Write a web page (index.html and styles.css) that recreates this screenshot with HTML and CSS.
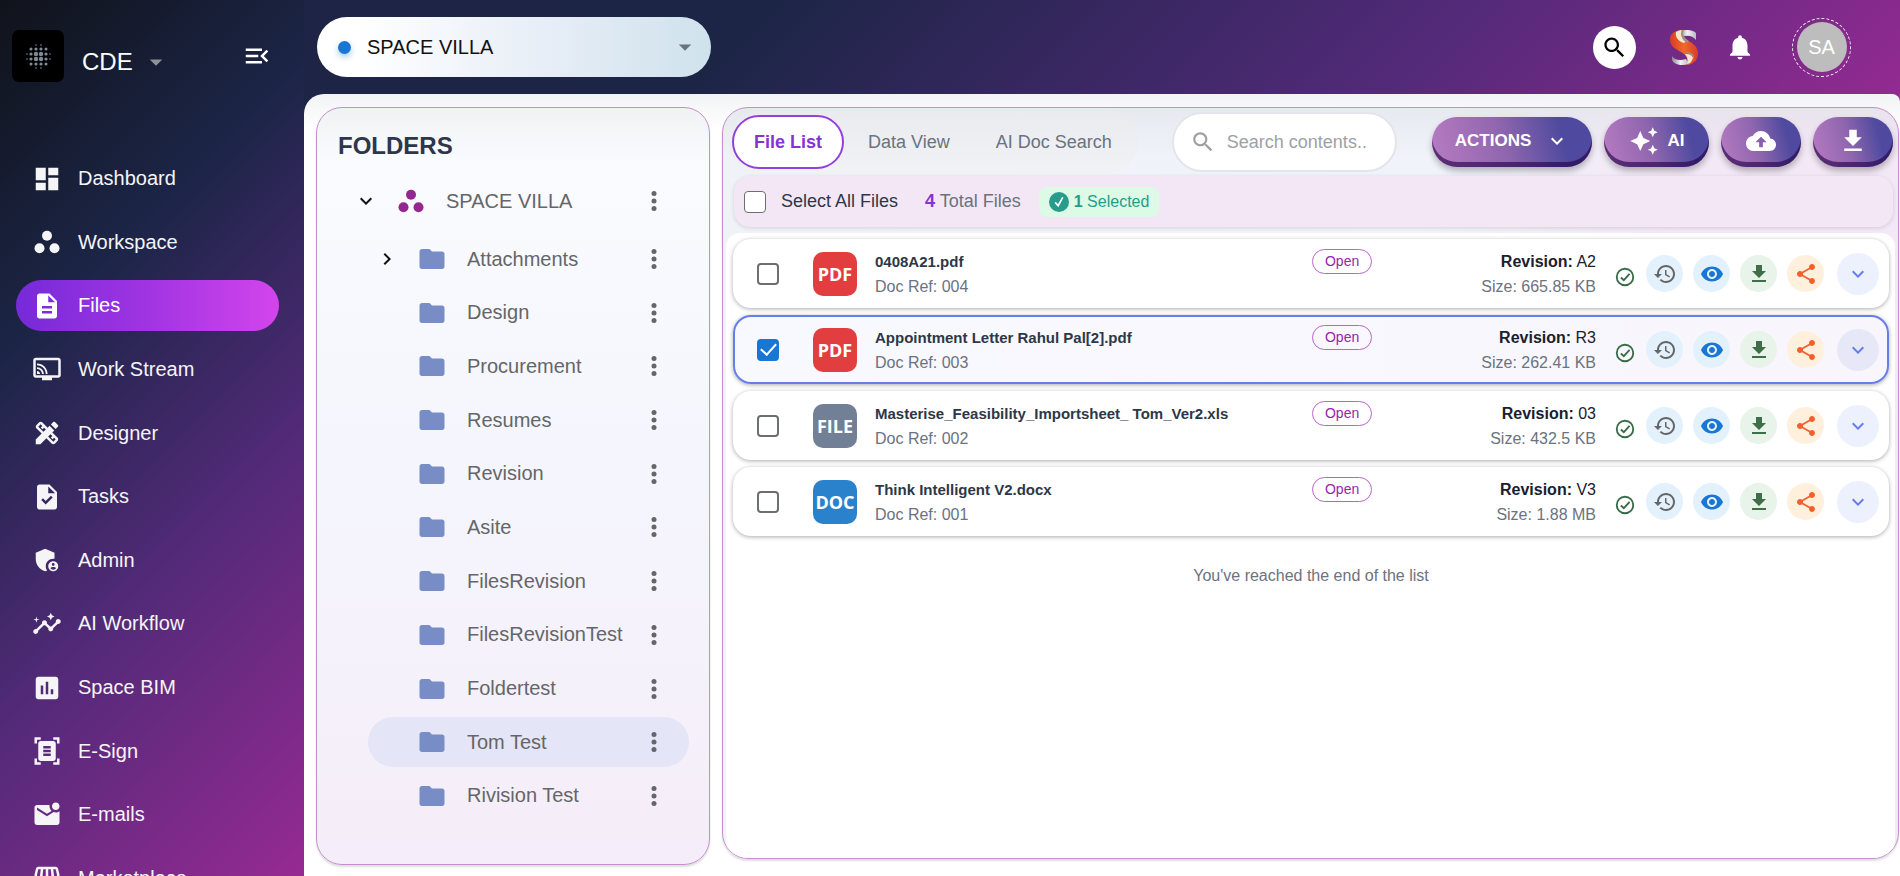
FILE: index.html
```html
<!DOCTYPE html>
<html lang="en">
<head>
<meta charset="utf-8">
<title>CDE - Files</title>
<link rel="stylesheet" href="styles.css">
</head>
<body>
<svg class="sprite" aria-hidden="true">
  <symbol id="i-dashboard" viewBox="0 0 24 24"><path d="M3 13h8V3H3v10zm0 8h8v-6H3v6zm10 0h8V11h-8v10zm0-18v6h8V3h-8z"/></symbol>
  <symbol id="i-workspace" viewBox="0 0 24 24"><circle cx="12" cy="7" r="4"/><circle cx="6" cy="17" r="4"/><circle cx="18" cy="17" r="4"/></symbol>
  <symbol id="i-file" viewBox="0 0 24 24"><path d="M14 2H6c-1.1 0-1.99.9-1.99 2L4 20c0 1.1.89 2 1.99 2H18c1.1 0 2-.9 2-2V8l-6-6zm2 16H8v-2h8v2zm0-4H8v-2h8v2zm-3-5V3.500L18.500 9H13z"/></symbol>
  <symbol id="i-stream" viewBox="0 0 24 24"><path d="M21 3H3c-1.100 0-2 .9-2 2v12c0 1.100.9 2 2 2h5v2h8v-2h5c1.100 0 2-.9 2-2V5c0-1.100-.9-2-2-2zm0 14H3V5h18v12z"/><path d="M4 13.500v2.500h2.500c0-1.400-1.100-2.500-2.500-2.500zM4 10.500V12c2.200 0 4 1.800 4 4h1.500c0-3-2.500-5.500-5.500-5.500zM4 7.500V9c3.900 0 7 3.100 7 7h1.500c0-4.700-3.800-8.500-8.500-8.500z"/></symbol>
  <symbol id="i-design" viewBox="0 0 24 24"><path d="M16.24 11.51l1.57-1.57-3.75-3.75-1.57 1.57-4.14-4.13c-.78-.78-2.05-.78-2.83 0l-1.9 1.9c-.78.78-.78 2.05 0 2.83l4.13 4.13L3 17.25V21h3.75l4.76-4.76 4.13 4.13c.95.95 2.23.6 2.83 0l1.9-1.9c.78-.78.78-2.05 0-2.83l-4.13-4.13zm-7.06-.44L5.04 6.940l1.890-1.900L8.200 6.310 7.020 7.500l1.410 1.410 1.190-1.190 1.450 1.450-1.890 1.900zm7.880 7.890l-4.130-4.130 1.900-1.900 1.450 1.450-1.190 1.190 1.410 1.410 1.190-1.190 1.270 1.270-1.900 1.900zM20.710 7.040c.39-.39.39-1.020 0-1.410l-2.340-2.340c-.47-.47-1.120-.29-1.410 0l-1.830 1.830 3.750 3.750 1.830-1.830z"/></symbol>
  <symbol id="i-task" viewBox="0 0 24 24"><path d="M14 2H6c-1.100 0-1.990.9-1.990 2L4 20c0 1.100.89 2 1.990 2H18c1.100 0 2-.9 2-2V8l-6-6zm-3.060 16L7.400 14.460l1.410-1.410 2.120 2.120 4.240-4.240 1.410 1.410L10.940 18zM13 9V3.500L18.500 9H13z"/></symbol>
  <symbol id="i-admin" viewBox="0 0 24 24"><path d="M17 11c.34 0 .67.04 1 .09V6.270L10.500 3 3 6.270v4.910c0 4.540 3.200 8.790 7.500 9.820.55-.13 1.080-.32 1.600-.55-.69-.98-1.100-2.170-1.100-3.450 0-3.310 2.690-6 6-6z"/><path d="M17 13c-2.210 0-4 1.790-4 4s1.790 4 4 4 4-1.790 4-4-1.790-4-4-4zm0 1.380c.62 0 1.120.51 1.120 1.120s-.51 1.120-1.120 1.120-1.120-.51-1.120-1.120.5-1.120 1.120-1.120zm0 5.370c-.93 0-1.740-.46-2.240-1.170.05-.72 1.510-1.080 2.240-1.080s2.190.36 2.240 1.080c-.5.71-1.310 1.170-2.240 1.170z"/></symbol>
  <symbol id="i-insights" viewBox="0 0 24 24"><path d="M21 8c-1.450 0-2.260 1.440-1.930 2.510l-3.550 3.560c-.3-.09-.74-.09-1.040 0l-2.550-2.550C12.270 10.450 11.460 9 10 9c-1.450 0-2.270 1.440-1.930 2.520l-4.560 4.550C2.440 15.740 1 16.550 1 18c0 1.100.9 2 2 2 1.450 0 2.260-1.440 1.930-2.510l4.550-4.560c.3.09.74.09 1.040 0l2.550 2.550C12.730 16.550 13.540 18 15 18c1.450 0 2.270-1.440 1.930-2.520l3.560-3.550c1.070.33 2.510-.48 2.510-1.930 0-1.100-.9-2-2-2z"/><path d="M15 9l.94-2.070L18 6l-2.060-.93L15 3l-.92 2.070L12 6l2.080.93zM3.500 11L4 9l2-.5L4 8l-.5-2L3 8l-2 .5L3 9z"/></symbol>
  <symbol id="i-chart" viewBox="0 0 24 24"><path d="M19 3H5c-1.100 0-2 .9-2 2v14c0 1.100.9 2 2 2h14c1.100 0 2-.9 2-2V5c0-1.100-.9-2-2-2zM9 17H7v-7h2v7zm4 0h-2V7h2v10zm4 0h-2v-4h2v4z"/></symbol>
  <symbol id="i-scan" viewBox="0 0 24 24"><path d="M7 3H4v3H2V1h5v2zm15 3V1h-5v2h3v3h2zM7 21H4v-3H2v5h5v-2zm13-3v3h-3v2h5v-5h-2zM19 18c0 1.100-.9 2-2 2H7c-1.100 0-2-.9-2-2V6c0-1.100.9-2 2-2h10c1.100 0 2 .9 2 2v12zM15 8H9v2h6V8zm0 3H9v2h6v-2zm0 3H9v2h6v-2z"/></symbol>
  <symbol id="i-mail" viewBox="0 0 24 24"><path d="M22 8.980V18c0 1.100-.9 2-2 2H4c-1.100 0-2-.9-2-2V6c0-1.100.9-2 2-2h10.100c-.06.32-.1.66-.1 1 0 1.480.65 2.790 1.670 3.710L12 11 4 6v2l8 5 5.300-3.320c.54.2 1.100.32 1.700.32 1.130 0 2.160-.39 3-1.020zM16 5c0 1.660 1.340 3 3 3s3-1.340 3-3-1.340-3-3-3-3 1.340-3 3z"/></symbol>
  <symbol id="i-store" viewBox="0 0 24 24"><path d="M21.900 8.890l-1.050-4.370c-.22-.9-1-1.520-1.910-1.520H5.050c-.9 0-1.690.63-1.900 1.520L2.100 8.890c-.24 1.020-.02 2.060.62 2.880.08.11.19.19.28.29V19c0 1.100.9 2 2 2h14c1.100 0 2-.9 2-2v-6.940c.09-.09.2-.18.28-.28.64-.82.87-1.870.62-2.890zm-2.990-3.900l1.050 4.370c.1.42.01.84-.25 1.170-.14.18-.44.47-.94.47-.61 0-1.140-.49-1.210-1.140L16.980 5l1.930-.01zM13 5h1.960l.54 4.520c.05.39-.07.78-.33 1.070-.22.26-.54.41-.95.41-.67 0-1.220-.59-1.220-1.310V5zM8.490 9.520L9.040 5H11v4.690c0 .72-.55 1.310-1.290 1.310-.34 0-.65-.15-.89-.41-.25-.29-.37-.68-.33-1.070zm-4.450-.16L5.050 5h1.970l-.58 4.860c-.08.65-.6 1.140-1.210 1.140-.49 0-.8-.29-.93-.47-.27-.32-.36-.75-.26-1.170z"/></symbol>
  <symbol id="i-menu" viewBox="0 0 24 24"><path d="M3 18h13v-2H3v2zm0-5h10v-2H3v2zm0-7v2h13V6H3zm18 9.590L17.420 12 21 8.410 19.590 7l-5 5 5 5L21 15.590z"/></symbol>
  <symbol id="i-caret" viewBox="0 0 24 24"><path d="M7 10l5 5 5-5z"/></symbol>
  <symbol id="i-search" viewBox="0 0 24 24"><path d="M15.500 14h-.79l-.28-.27C15.410 12.590 16 11.110 16 9.500 16 5.910 13.090 3 9.500 3S3 5.910 3 9.500 5.910 16 9.500 16c1.610 0 3.090-.59 4.230-1.570l.27.28v.79l5 4.990L20.490 19l-4.990-5zm-6 0C7.010 14 5 11.990 5 9.500S7.010 5 9.500 5 14 7.010 14 9.500 11.990 14 9.500 14z"/></symbol>
  <symbol id="i-bell" viewBox="0 0 24 24"><path d="M12 22c1.100 0 2-.9 2-2h-4c0 1.100.89 2 2 2zm6-6v-5c0-3.070-1.640-5.640-4.500-6.320V4c0-.83-.67-1.500-1.500-1.500s-1.500.67-1.500 1.500v.68C7.630 5.360 6 7.920 6 11v5l-2 2v1h16v-1l-2-2z"/></symbol>
  <symbol id="i-folder" viewBox="0 0 24 24"><path d="M10 4H4c-1.100 0-1.990.9-1.990 2L2 18c0 1.100.9 2 2 2h16c1.100 0 2-.9 2-2V8c0-1.100-.9-2-2-2h-8l-2-2z"/></symbol>
  <symbol id="i-more" viewBox="0 0 24 24"><circle cx="12" cy="6" r="2"/><circle cx="12" cy="12" r="2"/><circle cx="12" cy="18" r="2"/></symbol>
  <symbol id="i-down" viewBox="0 0 24 24"><path d="M16.590 8.590L12 13.170 7.410 8.590 6 10l6 6 6-6z"/></symbol>
  <symbol id="i-right" viewBox="0 0 24 24"><path d="M10 6L8.590 7.410 13.170 12l-4.580 4.590L10 18l6-6z"/></symbol>
  <symbol id="i-sparkle" viewBox="0 0 24 24"><path d="M19 9l1.250-2.750L23 5l-2.750-1.250L19 1l-1.250 2.750L15 5l2.750 1.250L19 9zm-7.500.5L9 4 6.500 9.500 1 12l5.500 2.500L9 20l2.500-5.500L17 12l-5.500-2.500zM19 15l-1.250 2.750L15 19l2.750 1.250L19 23l1.250-2.750L23 19l-2.750-1.250L19 15z"/></symbol>
  <symbol id="i-cloud" viewBox="0 0 24 24"><path d="M19.350 10.040C18.670 6.590 15.640 4 12 4 9.110 4 6.600 5.640 5.350 8.040 2.340 8.360 0 10.910 0 14c0 3.310 2.690 6 6 6h13c2.760 0 5-2.240 5-5 0-2.640-2.050-4.780-4.650-4.960zM13.500 13v4h-3v-4H7.500L12 8.500l4.500 4.500h-3z"/></symbol>
  <symbol id="i-download" viewBox="0 0 24 24"><path d="M19 9h-4V3H9v6H5l7 7 7-7zM5 18v2h14v-2H5z"/></symbol>
  <symbol id="i-history" viewBox="0 0 24 24"><path d="M13 3c-4.970 0-9 4.030-9 9H1l3.890 3.890.07.14L9 12H6c0-3.870 3.130-7 7-7s7 3.130 7 7-3.130 7-7 7c-1.930 0-3.680-.79-4.940-2.060l-1.420 1.420C8.270 19.990 10.510 21 13 21c4.970 0 9-4.030 9-9s-4.030-9-9-9zm-1 5v5l4.280 2.540.72-1.210-3.500-2.080V8H12z"/></symbol>
  <symbol id="i-eye" viewBox="0 0 24 24"><path d="M12 4.500C7 4.500 2.730 7.610 1 12c1.730 4.390 6 7.500 11 7.500s9.270-3.110 11-7.500c-1.730-4.390-6-7.500-11-7.500zM12 17c-2.760 0-5-2.240-5-5s2.240-5 5-5 5 2.240 5 5-2.240 5-5 5zm0-8c-1.660 0-3 1.340-3 3s1.340 3 3 3 3-1.340 3-3-1.340-3-3-3z"/></symbol>
  <symbol id="i-share" viewBox="0 0 24 24"><path d="M18 16.080c-.76 0-1.440.3-1.960.77L8.910 12.700c.05-.23.09-.46.09-.7s-.04-.47-.09-.7l7.050-4.110c.54.5 1.250.81 2.040.81 1.660 0 3-1.340 3-3s-1.340-3-3-3-3 1.340-3 3c0 .24.04.47.09.7L8.040 9.810C7.500 9.310 6.790 9 6 9c-1.660 0-3 1.340-3 3s1.340 3 3 3c.79 0 1.500-.31 2.040-.81l7.120 4.160c-.05.21-.08.43-.08.65 0 1.610 1.310 2.920 2.920 2.920s2.920-1.310 2.920-2.920-1.310-2.920-2.920-2.920z"/></symbol>
  <symbol id="i-approved" viewBox="0 0 24 24"><path fill="none" stroke="currentColor" stroke-width="2" d="M12 3a9 9 0 1 0 0 18 9 9 0 0 0 0-18zM7.500 12.500l3.200 3L17 8.500"/></symbol>
  <symbol id="i-check" viewBox="0 0 24 24"><circle cx="12" cy="12" r="12"/><path fill="none" stroke="#fff" stroke-width="2" d="M7.500 12.500l3.500 4 5.500-10"/></symbol>
</svg>

<div class="app">
  <aside class="sidebar">
    <div class="brand">
      <svg class="brand-logo" viewBox="0 0 52 52" aria-hidden="true">
        <rect width="52" height="52" rx="7" fill="#000"/>
        <g fill="#7f8b98">
          <circle cx="24" cy="24" r="2.200"/><circle cx="29" cy="24" r="2.200"/><circle cx="24" cy="29" r="2.200"/><circle cx="29" cy="29" r="2.200"/>
          <circle cx="19" cy="19" r="1.500"/><circle cx="24" cy="19" r="1.600"/><circle cx="29" cy="19" r="1.600"/><circle cx="34" cy="19" r="1.500"/>
          <circle cx="19" cy="24" r="1.600"/><circle cx="34" cy="24" r="1.600"/><circle cx="19" cy="29" r="1.600"/><circle cx="34" cy="29" r="1.600"/>
          <circle cx="19" cy="34" r="1.500"/><circle cx="24" cy="34" r="1.600"/><circle cx="29" cy="34" r="1.600"/><circle cx="34" cy="34" r="1.500"/>
        </g>
        <g fill="#4b5563">
          <circle cx="24" cy="15" r="1"/><circle cx="29" cy="15" r="1"/><circle cx="24" cy="38" r="1"/><circle cx="29" cy="38" r="1"/>
          <circle cx="15" cy="24" r="1"/><circle cx="15" cy="29" r="1"/><circle cx="38" cy="24" r="1"/><circle cx="38" cy="29" r="1"/>
        </g>
      </svg>
      <button class="brand-name" type="button">CDE <svg class="icon"><use href="#i-caret"/></svg></button>
      <button class="collapse" type="button" aria-label="Collapse menu"><svg class="icon"><use href="#i-menu"/></svg></button>
    </div>
    <nav class="nav">
      <a href="#"><svg class="icon"><use href="#i-dashboard"/></svg>Dashboard</a>
      <a href="#"><svg class="icon"><use href="#i-workspace"/></svg>Workspace</a>
      <a href="#" class="active" aria-current="page"><svg class="icon"><use href="#i-file"/></svg>Files</a>
      <a href="#"><svg class="icon"><use href="#i-stream"/></svg>Work Stream</a>
      <a href="#"><svg class="icon"><use href="#i-design"/></svg>Designer</a>
      <a href="#"><svg class="icon"><use href="#i-task"/></svg>Tasks</a>
      <a href="#"><svg class="icon"><use href="#i-admin"/></svg>Admin</a>
      <a href="#"><svg class="icon"><use href="#i-insights"/></svg>AI Workflow</a>
      <a href="#"><svg class="icon"><use href="#i-chart"/></svg>Space BIM</a>
      <a href="#"><svg class="icon"><use href="#i-scan"/></svg>E-Sign</a>
      <a href="#"><svg class="icon"><use href="#i-mail"/></svg>E-mails</a>
      <a href="#"><svg class="icon"><use href="#i-store"/></svg>Marketplace</a>
    </nav>
  </aside>

  <div class="page">
    <header class="topbar">
      <div class="project">
        <span class="project-dot"></span>
        <select aria-label="Project"><option>SPACE VILLA</option></select>
        <svg class="icon"><use href="#i-caret"/></svg>
      </div>
      <div class="topbar-actions">
        <button class="top-search" type="button" aria-label="Search"><svg class="icon"><use href="#i-search"/></svg></button>
        <svg class="s-logo" viewBox="0 0 28 35" role="img" aria-label="S logo">
          <defs>
            <linearGradient id="silver" x1="0" x2="1"><stop offset="0" stop-color="#8a8a92"/><stop offset=".5" stop-color="#f2f2f5"/><stop offset="1" stop-color="#b9b9c4"/></linearGradient>
            <linearGradient id="flame" x1="0" x2="1"><stop offset="0" stop-color="#d93a2b"/><stop offset=".5" stop-color="#f06a25"/><stop offset="1" stop-color="#d93a2b"/></linearGradient>
          </defs>
          <path fill="url(#silver)" d="M9 1c7-2 14-1 17 2v7c-4-5-9-5-14-3z"/>
          <path fill="url(#silver)" d="M2 26c2 4 8 5 14 3l3 5c-7 2-15 1-17-4z"/>
          <path fill="url(#flame)" d="M12 0C3 0-1 6 0 11c1 6 6 8 11 11 5 3 8 6 6 13 8-1 11-6 11-12 0-7-6-10-11-13-4-3-7-5-5-10z"/>
          <path fill="#f6e6cf" d="M6 2c2-1 3-2 6-2-2 5 0 8 4 11l-2 2C8 11 5 7 6 2z"/>
          <path fill="#a09080" d="M12 0h2c-2 4 0 8 5 11l-2 2c-5-3-7-8-5-13z"/>
          <path fill="#f6e6cf" d="M15 24c5 0 7 1 8 4-1 3-3 6-6 6 1-4 1-6-2-10z"/>
          <path fill="#a09080" d="M15 22c6 0 10 2 9 8-1-4-4-6-9-8z"/>
        </svg>
        <button class="bell" type="button" aria-label="Notifications"><svg class="icon"><use href="#i-bell"/></svg></button>
        <button class="avatar" type="button"><span>SA</span></button>
      </div>
    </header>

    <main class="content">
      <section class="folders">
        <h2>FOLDERS</h2>
        <div class="folder root">
          <button class="toggle" type="button" aria-label="Collapse SPACE VILLA"><svg class="icon"><use href="#i-down"/></svg></button>
          <svg class="icon folder-icon"><use href="#i-workspace"/></svg><span class="folder-name">SPACE VILLA</span>
          <button class="more" type="button" aria-label="More"><svg class="icon"><use href="#i-more"/></svg></button>
        </div>
        <ul class="tree">
          <li class="folder"><button class="toggle" type="button" aria-label="Expand Attachments"><svg class="icon"><use href="#i-right"/></svg></button><svg class="icon folder-icon"><use href="#i-folder"/></svg><span class="folder-name">Attachments</span><button class="more" type="button" aria-label="More"><svg class="icon"><use href="#i-more"/></svg></button></li>
          <li class="folder"><span class="toggle"></span><svg class="icon folder-icon"><use href="#i-folder"/></svg><span class="folder-name">Design</span><button class="more" type="button" aria-label="More"><svg class="icon"><use href="#i-more"/></svg></button></li>
          <li class="folder"><span class="toggle"></span><svg class="icon folder-icon"><use href="#i-folder"/></svg><span class="folder-name">Procurement</span><button class="more" type="button" aria-label="More"><svg class="icon"><use href="#i-more"/></svg></button></li>
          <li class="folder"><span class="toggle"></span><svg class="icon folder-icon"><use href="#i-folder"/></svg><span class="folder-name">Resumes</span><button class="more" type="button" aria-label="More"><svg class="icon"><use href="#i-more"/></svg></button></li>
          <li class="folder"><span class="toggle"></span><svg class="icon folder-icon"><use href="#i-folder"/></svg><span class="folder-name">Revision</span><button class="more" type="button" aria-label="More"><svg class="icon"><use href="#i-more"/></svg></button></li>
          <li class="folder"><span class="toggle"></span><svg class="icon folder-icon"><use href="#i-folder"/></svg><span class="folder-name">Asite</span><button class="more" type="button" aria-label="More"><svg class="icon"><use href="#i-more"/></svg></button></li>
          <li class="folder"><span class="toggle"></span><svg class="icon folder-icon"><use href="#i-folder"/></svg><span class="folder-name">FilesRevision</span><button class="more" type="button" aria-label="More"><svg class="icon"><use href="#i-more"/></svg></button></li>
          <li class="folder"><span class="toggle"></span><svg class="icon folder-icon"><use href="#i-folder"/></svg><span class="folder-name">FilesRevisionTest</span><button class="more" type="button" aria-label="More"><svg class="icon"><use href="#i-more"/></svg></button></li>
          <li class="folder"><span class="toggle"></span><svg class="icon folder-icon"><use href="#i-folder"/></svg><span class="folder-name">Foldertest</span><button class="more" type="button" aria-label="More"><svg class="icon"><use href="#i-more"/></svg></button></li>
          <li class="folder selected"><span class="toggle"></span><svg class="icon folder-icon"><use href="#i-folder"/></svg><span class="folder-name">Tom Test</span><button class="more" type="button" aria-label="More"><svg class="icon"><use href="#i-more"/></svg></button></li>
          <li class="folder"><span class="toggle"></span><svg class="icon folder-icon"><use href="#i-folder"/></svg><span class="folder-name">Rivision Test</span><button class="more" type="button" aria-label="More"><svg class="icon"><use href="#i-more"/></svg></button></li>
        </ul>
      </section>

      <section class="files">
        <div class="toolbar">
          <div class="tabs" role="tablist">
            <button class="tab current" role="tab" aria-selected="true" type="button">File List</button>
            <button class="tab" role="tab" type="button">Data View</button>
            <button class="tab" role="tab" type="button">AI Doc Search</button>
          </div>
          <label class="search"><svg class="icon"><use href="#i-search"/></svg><input type="text" aria-label="Search contents" placeholder="Search contents.."></label>
          <div class="actions">
            <button class="action menu" type="button">ACTIONS <svg class="icon"><use href="#i-down"/></svg></button>
            <button class="action ai" type="button"><svg class="icon"><use href="#i-sparkle"/></svg> AI</button>
            <button class="action" type="button" aria-label="Upload"><svg class="icon"><use href="#i-cloud"/></svg></button>
            <button class="action" type="button" aria-label="Download"><svg class="icon"><use href="#i-download"/></svg></button>
          </div>
        </div>

        <div class="selection">
          <label class="select-all"><input type="checkbox">Select All Files</label>
          <span class="total"><b>4</b> Total Files</span>
          <span class="picked"><svg class="icon"><use href="#i-check"/></svg><span><b>1</b> Selected</span></span>
        </div>

        <div class="list">
          <article class="file">
            <input type="checkbox" aria-label="Select 0408A21.pdf">
            <span class="type pdf">PDF</span>
            <div class="name"><h3>0408A21.pdf</h3><p>Doc Ref: 004</p></div>
            <div class="meta"><span class="chip">Open</span><div class="rev"><p class="rev-no"><b>Revision:</b> A2</p><p>Size: 665.85 KB</p></div></div>
            <svg class="icon approved"><use href="#i-approved"/></svg>
            <div class="tools">
              <button class="tool history" type="button" aria-label="History"><svg class="icon"><use href="#i-history"/></svg></button>
              <button class="tool view" type="button" aria-label="View"><svg class="icon"><use href="#i-eye"/></svg></button>
              <button class="tool download" type="button" aria-label="Download"><svg class="icon"><use href="#i-download"/></svg></button>
              <button class="tool share" type="button" aria-label="Share"><svg class="icon"><use href="#i-share"/></svg></button>
              <button class="tool expand" type="button" aria-label="Expand"><svg class="icon"><use href="#i-down"/></svg></button>
            </div>
          </article>
          <article class="file chosen">
            <input type="checkbox" checked aria-label="Select Appointment Letter Rahul Pal[2].pdf">
            <span class="type pdf">PDF</span>
            <div class="name"><h3>Appointment Letter Rahul Pal[2].pdf</h3><p>Doc Ref: 003</p></div>
            <div class="meta"><span class="chip">Open</span><div class="rev"><p class="rev-no"><b>Revision:</b> R3</p><p>Size: 262.41 KB</p></div></div>
            <svg class="icon approved"><use href="#i-approved"/></svg>
            <div class="tools">
              <button class="tool history" type="button" aria-label="History"><svg class="icon"><use href="#i-history"/></svg></button>
              <button class="tool view" type="button" aria-label="View"><svg class="icon"><use href="#i-eye"/></svg></button>
              <button class="tool download" type="button" aria-label="Download"><svg class="icon"><use href="#i-download"/></svg></button>
              <button class="tool share" type="button" aria-label="Share"><svg class="icon"><use href="#i-share"/></svg></button>
              <button class="tool expand" type="button" aria-label="Expand"><svg class="icon"><use href="#i-down"/></svg></button>
            </div>
          </article>
          <article class="file">
            <input type="checkbox" aria-label="Select Masterise_Feasibility_Importsheet_ Tom_Ver2.xls">
            <span class="type generic">FILE</span>
            <div class="name"><h3>Masterise_Feasibility_Importsheet_ Tom_Ver2.xls</h3><p>Doc Ref: 002</p></div>
            <div class="meta"><span class="chip">Open</span><div class="rev"><p class="rev-no"><b>Revision:</b> 03</p><p>Size: 432.5 KB</p></div></div>
            <svg class="icon approved"><use href="#i-approved"/></svg>
            <div class="tools">
              <button class="tool history" type="button" aria-label="History"><svg class="icon"><use href="#i-history"/></svg></button>
              <button class="tool view" type="button" aria-label="View"><svg class="icon"><use href="#i-eye"/></svg></button>
              <button class="tool download" type="button" aria-label="Download"><svg class="icon"><use href="#i-download"/></svg></button>
              <button class="tool share" type="button" aria-label="Share"><svg class="icon"><use href="#i-share"/></svg></button>
              <button class="tool expand" type="button" aria-label="Expand"><svg class="icon"><use href="#i-down"/></svg></button>
            </div>
          </article>
          <article class="file">
            <input type="checkbox" aria-label="Select Think Intelligent V2.docx">
            <span class="type doc">DOC</span>
            <div class="name"><h3>Think Intelligent V2.docx</h3><p>Doc Ref: 001</p></div>
            <div class="meta"><span class="chip">Open</span><div class="rev"><p class="rev-no"><b>Revision:</b> V3</p><p>Size: 1.88 MB</p></div></div>
            <svg class="icon approved"><use href="#i-approved"/></svg>
            <div class="tools">
              <button class="tool history" type="button" aria-label="History"><svg class="icon"><use href="#i-history"/></svg></button>
              <button class="tool view" type="button" aria-label="View"><svg class="icon"><use href="#i-eye"/></svg></button>
              <button class="tool download" type="button" aria-label="Download"><svg class="icon"><use href="#i-download"/></svg></button>
              <button class="tool share" type="button" aria-label="Share"><svg class="icon"><use href="#i-share"/></svg></button>
              <button class="tool expand" type="button" aria-label="Expand"><svg class="icon"><use href="#i-down"/></svg></button>
            </div>
          </article>
          <p class="end">You've reached the end of the list</p>
        </div>
      </section>
    </main>
  </div>
</div>
</body>
</html>
```

FILE: styles.css
```css
* { box-sizing: border-box; }

body {
  margin: 0;
  font-family: "Liberation Sans", Arial, sans-serif;
  font-size: 20px;
  color: #2d3748;
  overflow: hidden;
}

h2, h3, p, ul { margin: 0; padding: 0; list-style: none; }

button, input, select { font: inherit; color: inherit; }

button {
  display: flex;
  align-items: center;
  justify-content: center;
  padding: 0;
  border: 0;
  background: none;
}

.sprite { position: absolute; width: 0; height: 0; }

.icon {
  flex: none;
  width: 30px;
  height: 30px;
  fill: currentColor;
}

.app { display: flex; height: 100vh; }

/* Sidebar */
.sidebar {
  flex: none;
  width: 304px;
  overflow: hidden;
  color: #fff;
  background: linear-gradient(135deg, #10131a 0%, #1c2547 31%, #522a78 62%, #962a93 100%);
}

.brand {
  display: flex;
  align-items: center;
  height: 112px;
  padding: 0 32px 0 12px;
}

.brand-logo { width: 52px; height: 52px; }

.brand-name {
  gap: 8px;
  margin-left: 18px;
  padding-top: 12px;
  font-size: 24px;
}

.brand-name .icon { color: #8d929b; }

.collapse { margin-left: auto; }

.nav {
  display: flex;
  flex-direction: column;
  justify-content: space-between;
  height: calc(100vh - 125px);
  margin-top: 41px;
  padding: 0 25px 0 16px;
}

.nav a {
  display: flex;
  align-items: center;
  gap: 16px;
  height: 51px;
  padding-left: 16px;
  border-radius: 26px;
  color: #f5f5f7;
  text-decoration: none;
}

.nav .active { background: linear-gradient(90deg, #762ad8, #a034e2 50%, #d345ec); color: #fff; }

/* Top bar */
.page {
  display: flex;
  flex: 1;
  flex-direction: column;
  min-width: 0;
  background: linear-gradient(135deg, #1d2446 0%, #1d2547 28%, #522a79 68%, #962a93 100%) top / 100% 120px no-repeat;
}

.topbar {
  display: flex;
  align-items: center;
  justify-content: space-between;
  height: 94px;
  padding: 0 49px 0 13px;
}

.project {
  display: flex;
  align-items: center;
  width: 394px;
  height: 60px;
  padding: 0 11px 0 21px;
  border-radius: 30px;
  color: #6b7280;
  background: linear-gradient(90deg, #fff 10%, #e6edf6 60%, #cfe2ec);
}

.project-dot {
  width: 13px;
  height: 13px;
  border-radius: 50%;
  background: #1976d2;
  box-shadow: 0 3px 6px #1976d266;
}

.project select {
  flex: 1;
  margin-left: 16px;
  padding: 0;
  border: 0;
  appearance: none;
  background: none;
  color: #111;
}

.topbar-actions { display: flex; align-items: center; }

.top-search {
  width: 43px;
  height: 43px;
  border-radius: 50%;
  background: #fff;
  color: #000;
}

.top-search .icon { width: 27px; height: 27px; }
.s-logo { width: 28px; height: 35px; margin-left: 34px; }
.bell { margin-left: 27px; color: #fff; }
.bell .icon { width: 30px; height: 32px; }

.avatar {
  width: 59px;
  height: 59px;
  margin-left: 37px;
  border: 1px dashed #fff;
  border-radius: 50%;
  color: #fff;
}

.avatar span {
  width: 50px;
  border-radius: 50%;
  line-height: 50px;
  background: #bdbdbd;
}

/* Content */
.content {
  display: flex;
  flex: 1;
  gap: 12px;
  min-height: 0;
  padding: 13px 1px 11px 12px;
  border-radius: 20px 8px 0 0;
  background: linear-gradient(#f2f3f4, #fff 34px);
}

.folders {
  display: flex;
  flex: none;
  flex-direction: column;
  width: 394px;
  padding: 24px 20px 43px 21px;
  border: 1px solid #c48fcb;
  border-radius: 26px;
  background: linear-gradient(#f1f2f4, #f9fbfe 7%, #f5f6fd 45%, #f5edf9);
  box-shadow: 0 2px 2px #0002;
}

.folders h2 { font-size: 24px; line-height: 28px; }

.root { margin: 16px 0 8px 9px; }

.tree {
  display: flex;
  flex: 1;
  flex-direction: column;
  justify-content: space-between;
  padding-left: 30px;
}

.folder {
  display: flex;
  align-items: center;
  height: 50px;
  padding: 0 21px 0 4px;
  border-radius: 25px;
  color: #646669;
}

.folder.selected { background: #e4e5f7; }
.toggle { width: 30px; color: #111; }
.toggle .icon { width: 24px; height: 24px; }
.folder-icon { margin: 0 20px 0 15px; color: #788dc6; }
.root .folder-icon { color: #952791; }
.folder-name { flex: 1; white-space: nowrap; }
.more { width: 28px; color: #646669; }

/* Files panel */
.files {
  display: flex;
  flex: 1;
  flex-direction: column;
  min-width: 0;
  margin-bottom: 6px;
  padding: 0 3px;
  border: 1px solid #c48fcb;
  border-radius: 26px;
  overflow: hidden;
  background:
    linear-gradient(#d8dce066, #d8dce000 50px),
    linear-gradient(100deg, #eff2f7, #f0f3fa 55%, #f3e8f6 75%);
  box-shadow: 0 2px 2px #0002;
}

.toolbar {
  display: flex;
  align-items: center;
  height: 68px;
  padding: 0 2px;
  font-size: 18px;
}

.tabs {
  display: flex;
  gap: 2px;
  padding: 4px;
  border-radius: 32px;
  background: linear-gradient(#e9ebee, #f1f2f5);
  color: #6b7280;
}

.tab {
  height: 54px;
  padding: 0 20px;
  border: 2px solid transparent;
  border-radius: 28px;
}

.tab.current {
  border-color: #9340dd;
  background: #fff;
  color: #8633d6;
  font-weight: 700;
}

.search {
  display: flex;
  align-items: center;
  gap: 11px;
  width: 225px;
  height: 60px;
  margin-left: 34px;
  padding: 0 16px;
  border: 2px solid #e4e5ea;
  border-radius: 30px;
  background: #fff;
  color: #9ea0a5;
}

.search .icon { width: 26px; height: 26px; }
.search input { width: 100%; min-width: 0; padding: 0; border: 0; outline: 0; background: none; }
.search input::placeholder { color: #9ea0a5; opacity: 1; }

.actions { display: flex; gap: 12px; margin-left: auto; }

.action {
  width: 80px;
  height: 50px;
  padding-bottom: 3px;
  border-radius: 25px;
  color: #fff;
  font-size: 17px;
  font-weight: 700;
  background: linear-gradient(75deg, #b87cc2, #8f66ae 45%, #4f4a9f 80%);
  box-shadow: inset 0 -5px 0 #240049a0, 0 4px 6px #0004;
}

.action.menu { gap: 14px; width: 160px; }
.action.menu .icon { width: 24px; height: 24px; }
.action.ai { gap: 9px; width: 105px; }

input[type="checkbox"] {
  display: grid;
  place-content: center;
  flex: none;
  width: 22px;
  height: 22px;
  margin: 0;
  border: 2px solid #6b6f6d;
  border-radius: 4px;
  appearance: none;
  background: #fff;
}

input[type="checkbox"]:checked { border-color: #1976d2; background: #1976d2; }

input[type="checkbox"]:checked::before {
  content: "";
  width: 7px;
  height: 13px;
  margin-bottom: 4px;
  border: solid #fff;
  border-width: 0 2px 2px 0;
  transform: rotate(42deg);
}

.selection {
  display: flex;
  align-items: center;
  height: 51px;
  margin: 0 2px 6px 8px;
  padding-left: 10px;
  border-radius: 16px;
  background: #f3e7f5;
  box-shadow: 0 1px 4px #0002;
  font-size: 18px;
}

.select-all { display: flex; align-items: center; gap: 15px; }
.select-all input[type="checkbox"] { border-width: 1px; }
.total { margin-left: 27px; color: #6b7280; }
.total b { color: #8633d6; }

.picked {
  display: flex;
  align-items: center;
  gap: 5px;
  height: 30px;
  margin-left: 18px;
  padding: 0 10px;
  border-radius: 8px;
  background: #dcfae6;
  color: #279c8c;
  font-size: 16px;
}

.picked .icon { width: 20px; height: 20px; }

.list {
  flex: 1;
  min-height: 0;
  padding: 6px 6px 0 7px;
  border-radius: 14px 14px 0 0;
  background: #fff;
}

.file {
  display: flex;
  align-items: center;
  height: 69px;
  margin-bottom: 7px;
  padding: 0 8px 0 22px;
  border: 2px solid transparent;
  border-radius: 18px;
  background: #fff;
  box-shadow: 0 1px 4px #0005;
}

.file.chosen { border-color: #667eea; background: linear-gradient(90deg, #f8f9fe, #f8f6fc); }

.type {
  flex: none;
  width: 44px;
  margin: 0 18px 0 34px;
  border-radius: 10px;
  font: 700 18px/44px "Open Sans", sans-serif;
  text-align: center;
  color: #fff;
}

.pdf { background: #e23d3f; }
.generic { background: #718096; }
.doc { background: #2b82cc; }

.name { flex: 20 1 0; min-width: 0; white-space: nowrap; }
.name h3 { font-size: 15px; line-height: 25px; }
.name p, .rev p { font-size: 16px; line-height: 25px; color: #6b7280; }

.meta {
  display: flex;
  flex: 13 1 0;
  align-items: flex-start;
  justify-content: space-between;
}

.chip {
  padding: 0 12px;
  border: 1px solid #b867c6;
  border-radius: 13px;
  font-size: 14px;
  line-height: 23px;
  color: #9327a8;
}

.rev { text-align: right; white-space: nowrap; }
.rev .rev-no { color: #1a202c; }

.file .approved { width: 22px; height: 22px; margin: 6px 10px 0 18px; color: #3a6b48; }

.tools { display: flex; align-items: center; gap: 10px; }

.tool { width: 37px; height: 37px; border-radius: 50%; }
.tool .icon { width: 24px; height: 24px; }
.history { background: #e3f1fc; color: #666; }
.view { background: #e3f1fc; color: #1976d2; }
.download { background: #e8f3e9; color: #3f6f48; }
.share { background: #fff0de; color: #f1602c; }
.expand { width: 42px; height: 42px; margin-left: 3px; background: #edf1fe; color: #667eea; }
.chosen .expand { background: #e6e8f8; }

.end { padding-top: 22px; font-size: 16px; line-height: 22px; text-align: center; color: #6b7280; }
```
